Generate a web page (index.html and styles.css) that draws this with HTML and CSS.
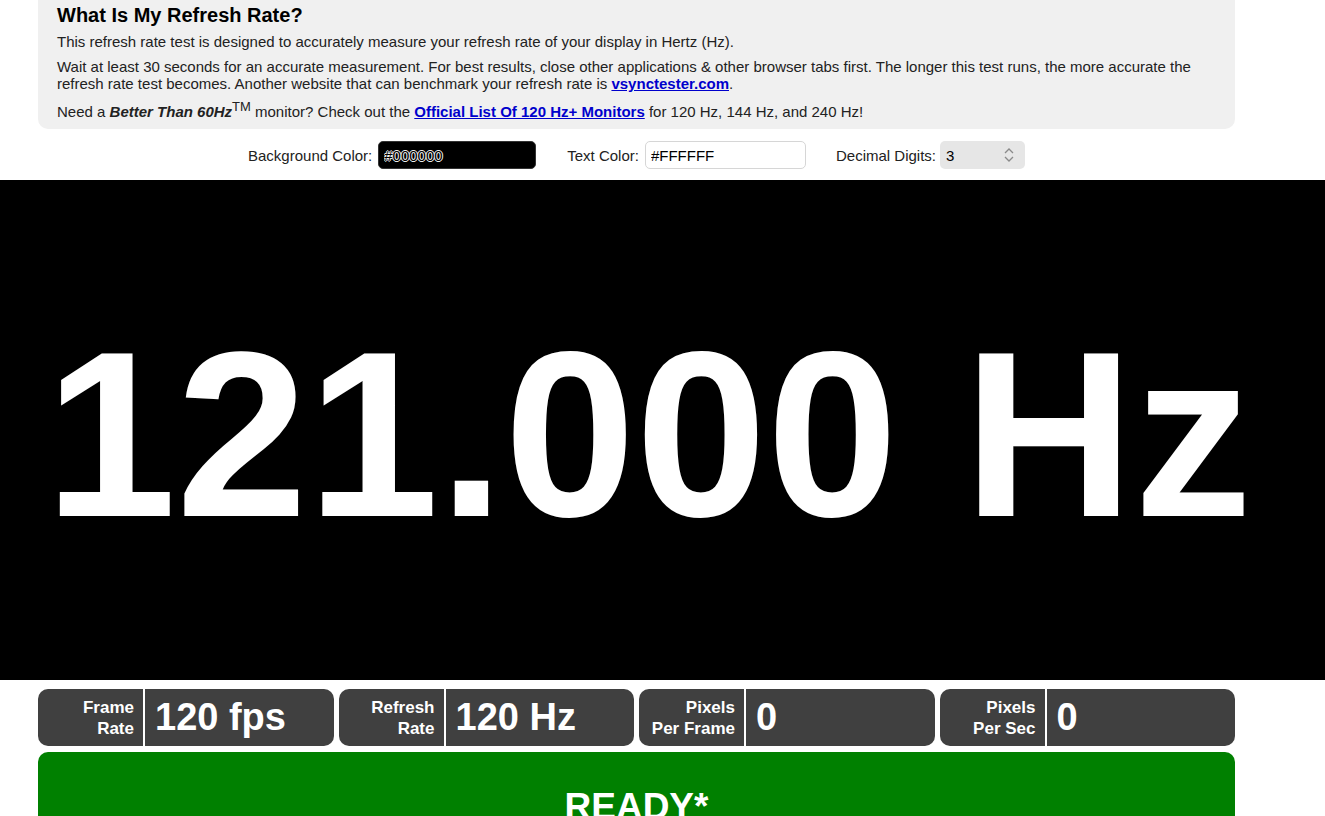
FILE: index.html
```html
<!DOCTYPE html>
<html lang="en">

<head>
  <meta charset="UTF-8" />
  <meta name="viewport" content="width=device-width, initial-scale=1.0" />
  <title>What Is My Refresh Rate?</title>
  <link rel="stylesheet" href="styles.css">
</head>

<body>
  <div class="intro">
    <h1>What Is My Refresh Rate?</h1>
    <p>This refresh rate test is designed to accurately measure your refresh rate of your display in Hertz (Hz).</p>
    <p>Wait at least 30 seconds for an accurate measurement. For best results, close other applications &amp; other browser tabs first. The longer this test runs, the more accurate the refresh rate test becomes. Another website that can benchmark your refresh rate is <a href="#">vsynctester.com</a>.</p>
    <p class="last">Need a <b><i>Better Than 60Hz</i></b><sup>TM</sup> monitor? Check out the <a href="#">Official List Of 120 Hz+ Monitors</a> for 120 Hz, 144 Hz, and 240 Hz!</p>
  </div>

  <!-- 设置 -->
  <div class="options">
    <label>Background Color:</label>
    <input class="color-bg" type="text" value="#000000">
    <label class="gap">Text Color:</label>
    <input class="color-text" type="text" value="#FFFFFF">
    <label class="gap gap-sm">Decimal Digits:</label>
    <span class="digits">
      <span>3</span>
      <svg width="12" height="18" viewBox="0 0 12 18">
        <path d="M2 7 L6 3 L10 7" fill="none" stroke="#8a8a8a" stroke-width="1.3" />
        <path d="M2 11 L6 15 L10 11" fill="none" stroke="#8a8a8a" stroke-width="1.3" />
      </svg>
    </span>
  </div>

  <div class="display">
    <div class="rate" id="rate">121.000 Hz</div>
  </div>

  <div class="stats">
    <div class="stat">
      <div class="label">Frame<br>Rate</div>
      <div class="value" id="fps">120 fps</div>
    </div>
    <div class="stat">
      <div class="label">Refresh<br>Rate</div>
      <div class="value" id="hz">120 Hz</div>
    </div>
    <div class="stat">
      <div class="label">Pixels<br>Per Frame</div>
      <div class="value">0</div>
    </div>
    <div class="stat">
      <div class="label">Pixels<br>Per Sec</div>
      <div class="value">0</div>
    </div>
  </div>

  <div class="status">READY*</div>
</body>

</html>
```

FILE: styles.css
```css
body {
  margin: 0;
  padding: 0;
  font-family: "Liberation Sans", Arial, sans-serif;
  color: #222;
  background: #fff;
  overflow: hidden;
}

/* 顶部说明 */
.intro {
  width: 1197px;
  box-sizing: border-box;
  margin-left: 38px;
  padding: 4px 19px 8px;
  background-color: #f0f0f0;
  border-radius: 0 0 10px 10px;
}

.intro h1 {
  margin: 0;
  font-size: 20px;
  line-height: 23px;
  color: #000;
}

.intro p {
  margin: 6px 0 0;
  font-size: 15px;
  line-height: 17px;
}

.intro p + p {
  margin-top: 8px;
}

.intro p.last {
  margin-top: 10px;
  line-height: 19px;
}

.intro sup {
  font-size: 13px;
  line-height: 0;
}

.intro a {
  color: #0000cc;
  font-weight: bold;
}

/* 设置行 */
.options {
  width: 1197px;
  margin: 12px 0 0 38px;
  display: flex;
  justify-content: center;
  align-items: center;
  font-size: 15px;
  height: 28px;
}

.options label {
  margin-right: 6px;
  color: #222;
}

.options .gap {
  margin-left: 31px;
}

.options .gap-sm {
  margin-left: 30px;
  margin-right: 4px;
}

.options input {
  width: 158px;
  height: 28px;
  box-sizing: border-box;
  padding: 0 5px;
  font-family: "Liberation Sans", Arial, sans-serif;
  font-size: 15px;
  border-radius: 5px;
  outline: none;
}

.color-bg {
  background: #000;
  color: #000;
  border: 1px solid #333;
  text-shadow: -1px 0 #eee, 1px 0 #eee, 0 -1px #eee, 0 1px #eee;
}

.options .color-text {
  width: 161px;
  background: #fff;
  color: #000;
  border: 1px solid #d6d6d6;
}

.digits {
  width: 85px;
  height: 28px;
  box-sizing: border-box;
  padding: 0 10px 0 6px;
  display: flex;
  align-items: center;
  justify-content: space-between;
  background: #e6e6e6;
  border-radius: 5px;
  color: #000;
}

/* 大数字 */
.display {
  margin-top: 11px;
  height: 500px;
  background: #000;
  box-sizing: border-box;
  padding-top: 116px;
}

.rate {
  padding-right: 28px;
  text-align: center;
  color: #fff;
  font-weight: bold;
  font-size: 236px;
  line-height: 276px;
  white-space: nowrap;
}

/* 统计栏 */
.stats {
  width: 1197px;
  margin: 9px 0 0 38px;
  display: grid;
  grid-template-columns: repeat(4, 1fr);
  gap: 5px;
}

.stat {
  height: 57px;
  display: flex;
  background: #404040;
  border-radius: 10px;
  color: #fff;
  font-weight: bold;
}

.stat .label {
  width: 107px;
  box-sizing: border-box;
  padding-right: 9px;
  border-right: 2px solid #fff;
  display: flex;
  flex-direction: column;
  justify-content: center;
  text-align: right;
  align-items: flex-end;
  font-size: 17px;
  line-height: 21px;
}

.stat .value {
  padding-left: 10px;
  display: flex;
  align-items: center;
  font-size: 38px;
}

/* 状态 */
.status {
  width: 1197px;
  margin: 6px 0 0 38px;
  height: 120px;
  box-sizing: border-box;
  padding-top: 34px;
  background: #008000;
  border-radius: 10px;
  color: #fff;
  text-align: center;
  font-weight: bold;
  font-size: 37px;
  line-height: 42px;
}
```
